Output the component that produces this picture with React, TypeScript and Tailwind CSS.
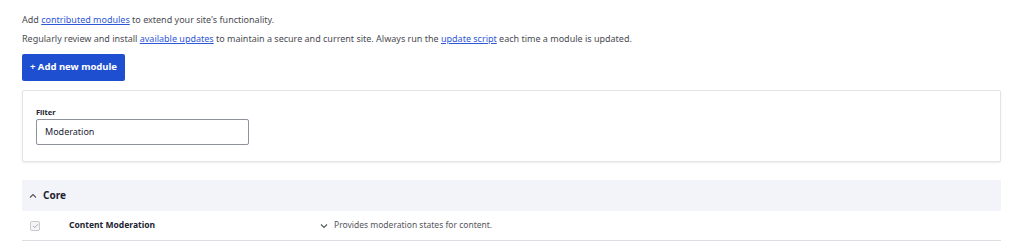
import React from "react";

export default function App() {
  return (
    <div className="min-h-[249px] w-full bg-white pl-[22px] pr-[23px] pt-[13px] text-[#4a4b52]" style={{ fontFamily: '"Noto Sans", "Liberation Sans", sans-serif' }}>
      <p className="text-[9px] leading-[13px]">
        Add <a className="text-[#2f58d8] underline" href="#">contributed modules</a> to extend your site's functionality.
      </p>
      <p className="mt-[6px] text-[9px] leading-[13px]">
        Regularly review and install <a className="text-[#2f58d8] underline" href="#">available updates</a> to maintain a secure and current site. Always run the <a className="text-[#2f58d8] underline" href="#">update script</a> each time a module is updated.
      </p>
      <button className="mt-[9px] flex h-[27px] w-[103px] items-center justify-center rounded-[2px] bg-[#1f4fd1] text-[9.5px] font-bold text-white">
        + Add new module
      </button>
      <div className="mt-[9px] h-[72px] rounded-[2px] border border-[#e3e4e8] bg-white px-[13px] pt-[16px] shadow-[0_1px_2px_rgba(0,0,0,0.08)]">
        <div className="text-[7.5px] font-bold leading-[10px] text-[#222330]">Filter</div>
        <div className="mt-[2px] flex h-[26px] w-[213px] items-center rounded-[2px] border border-[#8e929c] px-[8px] text-[9px] text-[#222330]">
          Moderation
        </div>
      </div>
      <div className="mt-[18px] flex h-[31px] items-center gap-[6px] bg-[#f3f4f9] pl-[7px]">
        <svg width="8" height="6" viewBox="0 0 8 6" className="text-[#55565b]">
          <path d="M1 4.5 L4 1.5 L7 4.5" fill="none" stroke="currentColor" strokeWidth="1.1" />
        </svg>
        <span className="text-[10px] font-bold text-[#222330]">Core</span>
      </div>
      <div className="flex h-[30px] items-center border-b border-[#dedfe4]">
        <div className="ml-[8px] flex h-[10px] w-[10px] items-center justify-center rounded-[2px] border border-[#c8c9cf] bg-[#f5f5f7]">
          <svg width="7" height="6" viewBox="0 0 7 6">
            <path d="M1 3 L2.8 4.6 L6 1.2" fill="none" stroke="#a0a2aa" strokeWidth="0.9" />
          </svg>
        </div>
        <span className="ml-[29px] w-[250px] text-[8.5px] font-bold text-[#222330]">Content Moderation</span>
        <svg width="8" height="6" viewBox="0 0 8 6" className="ml-[1px] text-[#55565b]">
          <path d="M1 1.5 L4 4.5 L7 1.5" fill="none" stroke="currentColor" strokeWidth="1.1" />
        </svg>
        <span className="ml-[6px] text-[8.5px] text-[#55565b]">Provides moderation states for content.</span>
      </div>
    </div>
  );
}
